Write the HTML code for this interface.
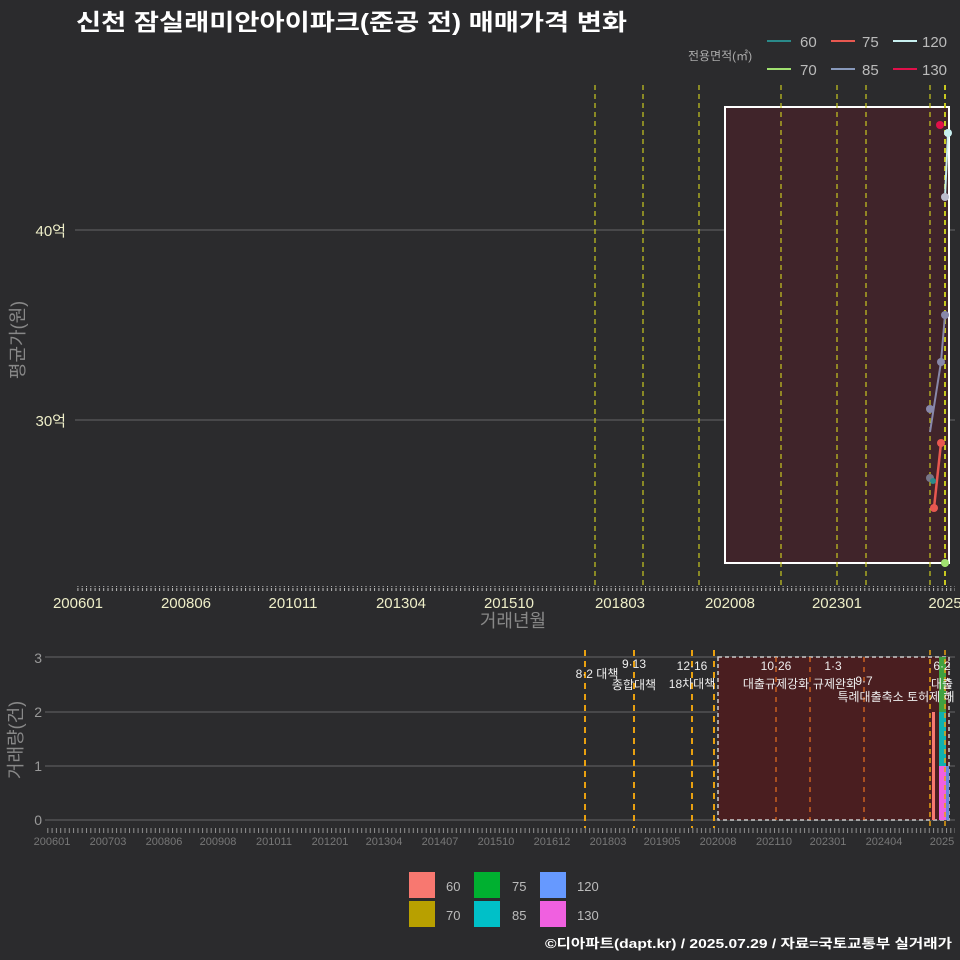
<!DOCTYPE html><html><head><meta charset="utf-8"><style>body{margin:0;background:#2b2b2d}svg{display:block}text{font-family:"Liberation Sans","Noto Sans CJK KR",sans-serif}</style></head><body>
<svg width="960" height="960" viewBox="0 0 960 960">
<defs><pattern id="tk" width="4.3" height="6" patternUnits="userSpaceOnUse"><rect width="1" height="5" fill="#bbb"/></pattern></defs>
<rect width="960" height="960" fill="#2b2b2d"/>
<text x="76" y="30" font-size="23" font-weight="bold" fill="#fff" textLength="551" lengthAdjust="spacingAndGlyphs">신천 잠실래미안아이파크(준공 전) 매매가격 변화</text>
<text x="688" y="60" font-size="12" fill="#aaa">전용면적(㎡)</text>
<g font-size="15" fill="#bbb">
<line x1="767" y1="41" x2="791" y2="41" stroke="#2a8a8a" stroke-width="2"/><text x="800" y="47">60</text>
<line x1="831" y1="41" x2="855" y2="41" stroke="#e85850" stroke-width="2"/><text x="862" y="47">75</text>
<line x1="893" y1="41" x2="917" y2="41" stroke="#c8f0f0" stroke-width="2"/><text x="922" y="47">120</text>
<line x1="767" y1="69" x2="791" y2="69" stroke="#a0e070" stroke-width="2"/><text x="800" y="75">70</text>
<line x1="831" y1="69" x2="855" y2="69" stroke="#8899bb" stroke-width="2"/><text x="862" y="75">85</text>
<line x1="893" y1="69" x2="917" y2="69" stroke="#e0104a" stroke-width="2"/><text x="922" y="75">130</text></g>
<line x1="75" y1="230" x2="955" y2="230" stroke="#666"/><line x1="75" y1="420" x2="955" y2="420" stroke="#666"/>
<text x="66" y="236" font-size="15" fill="#eeeec8" text-anchor="end">40억</text>
<text x="66" y="426" font-size="15" fill="#eeeec8" text-anchor="end">30억</text>
<text transform="translate(24,340) rotate(-90)" font-size="18" fill="#888" text-anchor="middle">평균가(원)</text>
<rect x="725" y="107" width="224" height="456" fill="#40242a" stroke="#fff" stroke-width="2"/>
<g stroke="#c8c820" stroke-dasharray="5,4" stroke-width="1.2">
<line x1="595" y1="85" x2="595" y2="585"/><line x1="643" y1="85" x2="643" y2="585"/><line x1="699" y1="85" x2="699" y2="585"/><line x1="781" y1="85" x2="781" y2="585"/><line x1="837" y1="85" x2="837" y2="585"/><line x1="866" y1="85" x2="866" y2="585"/><line x1="930" y1="85" x2="930" y2="585"/><line x1="945" y1="85" x2="945" y2="585" stroke-width="2"/></g>
<polyline points="930,432 941,362 945,315" stroke="#8888aa" stroke-width="2" fill="none"/>
<polyline points="934,508 941,443" stroke="#e85850" stroke-width="2.5" fill="none"/>
<polyline points="945,197 948,133" stroke="#c8f0f0" stroke-width="2" fill="none"/>
<g fill="#8888aa"><circle cx="930" cy="409" r="4"/><circle cx="941" cy="362" r="4"/><circle cx="945" cy="315" r="4"/></g>
<circle cx="934" cy="508" r="4" fill="#e85850"/><circle cx="941" cy="443" r="4" fill="#e85850"/>
<circle cx="930" cy="478" r="4" fill="#778"/><circle cx="933" cy="481" r="3" fill="#2a8a8a"/>
<circle cx="940" cy="125" r="4" fill="#e0104a"/><circle cx="948" cy="133" r="4" fill="#c8f0f0"/><circle cx="945" cy="197" r="4" fill="#bbc"/><circle cx="945" cy="563" r="4" fill="#a0e070"/>
<rect x="75" y="586" width="880" height="5" fill="url(#tk)"/>
<g font-size="15" fill="#eeeec8" text-anchor="middle"><text x="78" y="608">200601</text><text x="186" y="608">200806</text><text x="293" y="608">201011</text><text x="401" y="608">201304</text><text x="509" y="608">201510</text><text x="620" y="608">201803</text><text x="730" y="608">202008</text><text x="837" y="608">202301</text><text x="945" y="608">2025</text></g>
<text x="513" y="627" font-size="18" fill="#888" text-anchor="middle">거래년월</text>
<line x1="45" y1="657" x2="955" y2="657" stroke="#666"/><line x1="45" y1="712" x2="955" y2="712" stroke="#666"/><line x1="45" y1="766" x2="955" y2="766" stroke="#666"/><line x1="45" y1="820" x2="955" y2="820" stroke="#666"/>
<g font-size="14" fill="#999" text-anchor="end"><text x="42" y="663">3</text><text x="42" y="717">2</text><text x="42" y="771">1</text><text x="42" y="825">0</text></g>
<text transform="translate(22,740) rotate(-90)" font-size="18" fill="#888" text-anchor="middle">거래량(건)</text>
<rect x="718" y="657" width="231" height="163" fill="#4a1e20" stroke="#ccc" stroke-dasharray="4,3" stroke-width="1.5"/>
<g stroke="#e8a010" stroke-dasharray="6,5" stroke-width="2"><line x1="585" y1="650" x2="585" y2="828"/><line x1="634" y1="650" x2="634" y2="828"/><line x1="692" y1="650" x2="692" y2="828"/><line x1="714" y1="650" x2="714" y2="828"/></g>
<g stroke="#e87020" stroke-dasharray="5,5" stroke-width="1.2"><line x1="776" y1="657" x2="776" y2="820"/><line x1="810" y1="657" x2="810" y2="820"/><line x1="864" y1="657" x2="864" y2="820"/></g>
<rect x="932" y="712" width="3" height="108" fill="#f87870"/><rect x="939" y="712" width="7" height="54" fill="#10b0b0"/><rect x="939" y="766" width="7" height="54" fill="#f060e0"/><rect x="939" y="657" width="7" height="55" fill="#40a040"/><rect x="946" y="766" width="3" height="54" fill="#6688dd"/>
<g stroke="#e8a010" stroke-dasharray="5,4" stroke-width="1.5"><line x1="930" y1="650" x2="930" y2="828"/><line x1="945" y1="650" x2="945" y2="828"/></g>
<g font-size="12" fill="#eee" text-anchor="middle"><text x="597" y="678">8·2 대책</text><text x="634" y="668">9·13</text><text x="634" y="689">종합대책</text><text x="692" y="670">12·16</text><text x="692" y="688">18차대책</text><text x="776" y="670">10·26</text><text x="776" y="688">대출규제강화</text><text x="833" y="670">1·3</text><text x="835" y="688">규제완화</text><text x="864" y="685">9·7</text><text x="896" y="701">특례대출축소 토허제 해</text><text x="942" y="670">6·2</text><text x="942" y="688">대출</text></g>
<rect x="45" y="828" width="910" height="5" fill="url(#tk)" opacity="0.7"/>
<g font-size="11" fill="#777" text-anchor="middle"><text x="52" y="845">200601</text><text x="108" y="845">200703</text><text x="164" y="845">200806</text><text x="218" y="845">200908</text><text x="274" y="845">201011</text><text x="330" y="845">201201</text><text x="384" y="845">201304</text><text x="440" y="845">201407</text><text x="496" y="845">201510</text><text x="552" y="845">201612</text><text x="608" y="845">201803</text><text x="662" y="845">201905</text><text x="718" y="845">202008</text><text x="774" y="845">202110</text><text x="828" y="845">202301</text><text x="884" y="845">202404</text><text x="942" y="845">2025</text></g>
<rect x="409" y="872" width="26" height="26" fill="#f87870"/><rect x="474" y="872" width="26" height="26" fill="#00b030"/><rect x="540" y="872" width="26" height="26" fill="#6699ff"/>
<rect x="409" y="901" width="26" height="26" fill="#b8a000"/><rect x="474" y="901" width="26" height="26" fill="#00c0c8"/><rect x="540" y="901" width="26" height="26" fill="#f060e0"/>
<g font-size="13" fill="#bbb"><text x="446" y="891">60</text><text x="512" y="891">75</text><text x="577" y="891">120</text><text x="446" y="920">70</text><text x="512" y="920">85</text><text x="577" y="920">130</text></g>
<text x="952" y="948" font-size="13" font-weight="bold" fill="#fff" text-anchor="end" textLength="407" lengthAdjust="spacingAndGlyphs">©디아파트(dapt.kr) / 2025.07.29 / 자료=국토교통부 실거래가</text>
</svg></body></html>
